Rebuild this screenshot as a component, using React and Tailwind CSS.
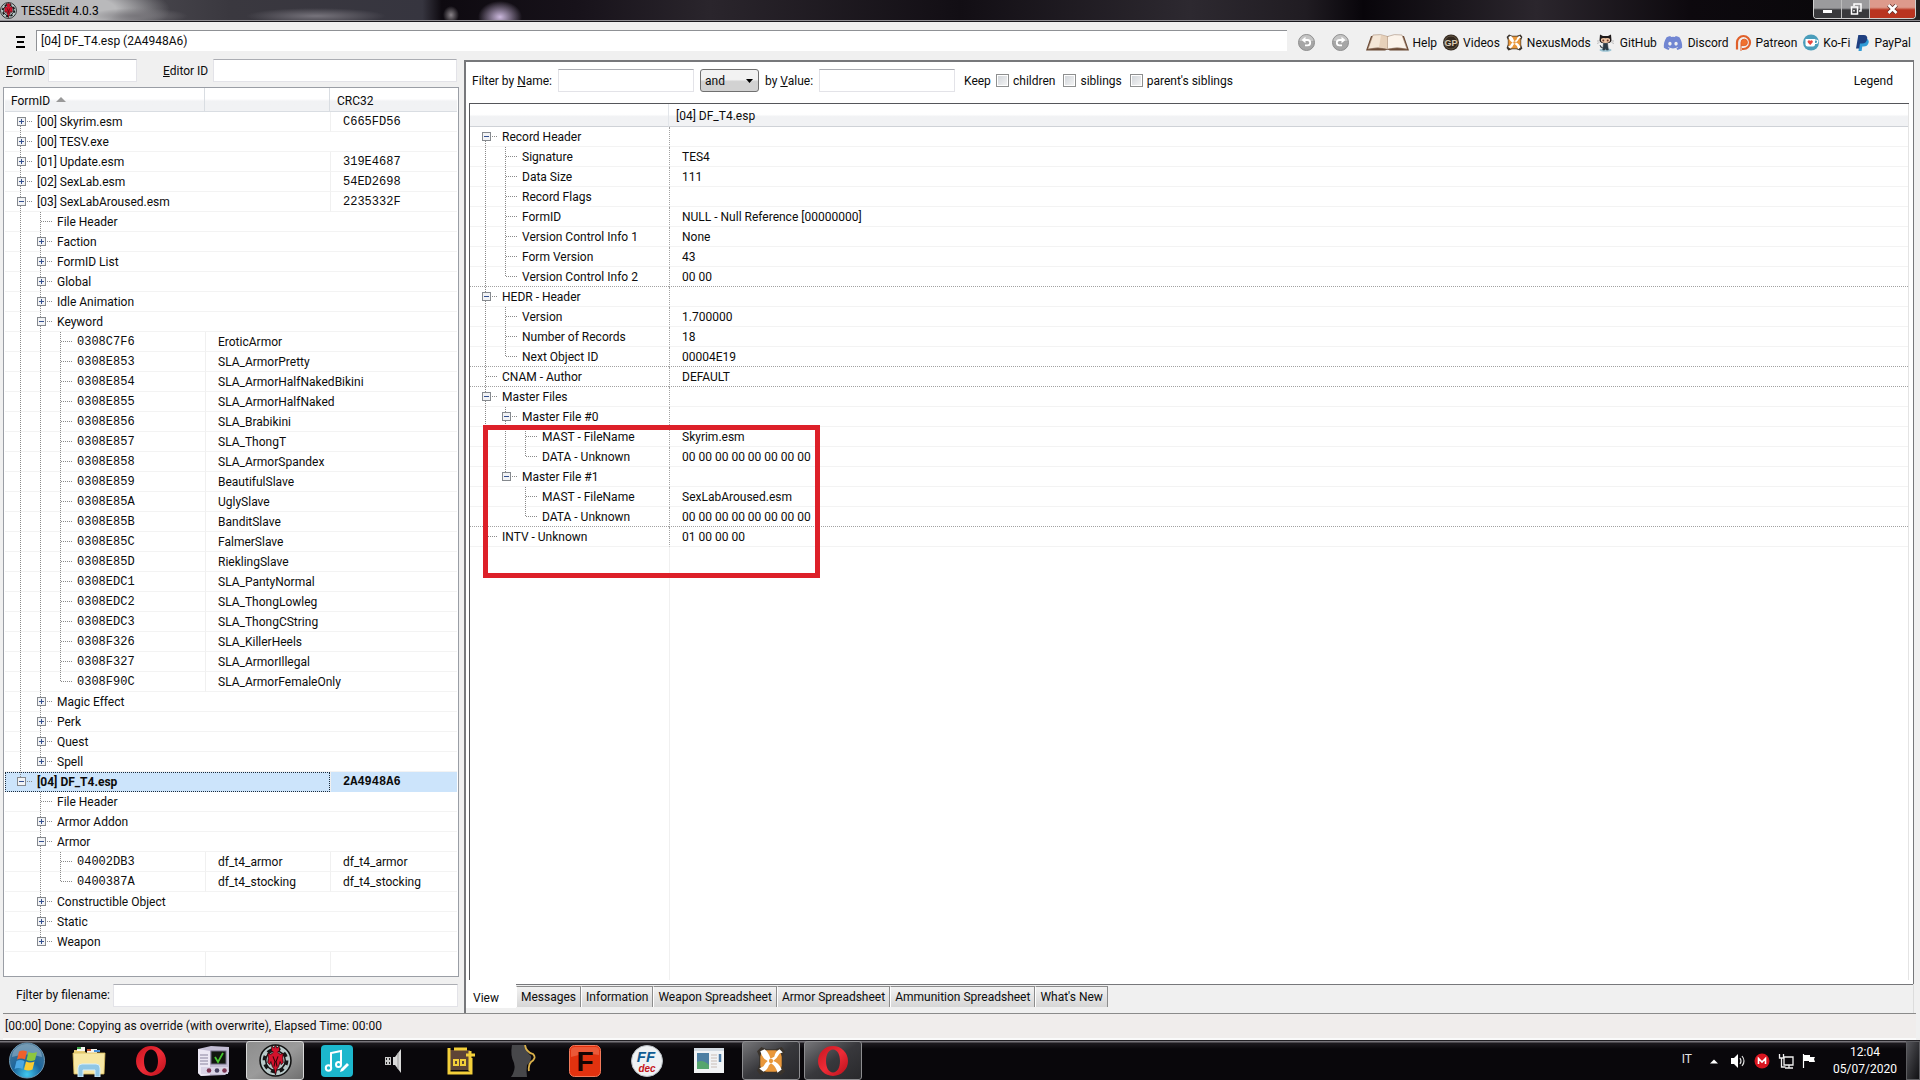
import React from "react";
import { FaDiscord } from "react-icons/fa";

/* ---------- data ---------- */

// level, label, expander ("+", "-" or none), editor id, third column
const keywords = [
  ["0308C7F6", "EroticArmor"],
  ["0308E853", "SLA_ArmorPretty"],
  ["0308E854", "SLA_ArmorHalfNakedBikini"],
  ["0308E855", "SLA_ArmorHalfNaked"],
  ["0308E856", "SLA_Brabikini"],
  ["0308E857", "SLA_ThongT"],
  ["0308E858", "SLA_ArmorSpandex"],
  ["0308E859", "BeautifulSlave"],
  ["0308E85A", "UglySlave"],
  ["0308E85B", "BanditSlave"],
  ["0308E85C", "FalmerSlave"],
  ["0308E85D", "RieklingSlave"],
  ["0308EDC1", "SLA_PantyNormal"],
  ["0308EDC2", "SLA_ThongLowleg"],
  ["0308EDC3", "SLA_ThongCString"],
  ["0308F326", "SLA_KillerHeels"],
  ["0308F327", "SLA_ArmorIllegal"],
  ["0308F90C", "SLA_ArmorFemaleOnly"],
];

const fileTree = [
  { level: 0, label: "[00] Skyrim.esm", box: "+", crc: "C665FD56" },
  { level: 0, label: "[00] TESV.exe", box: "+" },
  { level: 0, label: "[01] Update.esm", box: "+", crc: "319E4687" },
  { level: 0, label: "[02] SexLab.esm", box: "+", crc: "54ED2698" },
  { level: 0, label: "[03] SexLabAroused.esm", box: "-", crc: "2235332F" },
  { level: 1, label: "File Header" },
  { level: 1, label: "Faction", box: "+" },
  { level: 1, label: "FormID List", box: "+" },
  { level: 1, label: "Global", box: "+" },
  { level: 1, label: "Idle Animation", box: "+" },
  { level: 1, label: "Keyword", box: "-" },
  ...keywords.map(([id, name]) => ({ level: 2, label: id, name, mono: true })),
  { level: 1, label: "Magic Effect", box: "+" },
  { level: 1, label: "Perk", box: "+" },
  { level: 1, label: "Quest", box: "+" },
  { level: 1, label: "Spell", box: "+" },
  { level: 0, label: "[04] DF_T4.esp", box: "-", crc: "2A4948A6", selected: true },
  { level: 1, label: "File Header" },
  { level: 1, label: "Armor Addon", box: "+" },
  { level: 1, label: "Armor", box: "-" },
  { level: 2, label: "04002DB3", name: "df_t4_armor", third: "df_t4_armor", mono: true },
  { level: 2, label: "0400387A", name: "df_t4_stocking", third: "df_t4_stocking", mono: true },
  { level: 1, label: "Constructible Object", box: "+" },
  { level: 1, label: "Static", box: "+" },
  { level: 1, label: "Weapon", box: "+" },
];

const recordTree = [
  { level: 0, label: "Record Header", box: "-" },
  { level: 1, label: "Signature", value: "TES4" },
  { level: 1, label: "Data Size", value: "111" },
  { level: 1, label: "Record Flags" },
  { level: 1, label: "FormID", value: "NULL - Null Reference [00000000]" },
  { level: 1, label: "Version Control Info 1", value: "None" },
  { level: 1, label: "Form Version", value: "43" },
  { level: 1, label: "Version Control Info 2", value: "00 00", groupEnd: true },
  { level: 0, label: "HEDR - Header", box: "-" },
  { level: 1, label: "Version", value: "1.700000" },
  { level: 1, label: "Number of Records", value: "18" },
  { level: 1, label: "Next Object ID", value: "00004E19", groupEnd: true },
  { level: 0, label: "CNAM - Author", value: "DEFAULT", groupEnd: true },
  { level: 0, label: "Master Files", box: "-" },
  { level: 1, label: "Master File #0", box: "-" },
  { level: 2, label: "MAST - FileName", value: "Skyrim.esm" },
  { level: 2, label: "DATA - Unknown", value: "00 00 00 00 00 00 00 00" },
  { level: 1, label: "Master File #1", box: "-" },
  { level: 2, label: "MAST - FileName", value: "SexLabAroused.esm" },
  { level: 2, label: "DATA - Unknown", value: "00 00 00 00 00 00 00 00", groupEnd: true },
  { level: 0, label: "INTV - Unknown", value: "01 00 00 00" },
];

/* ---------- tree drawing ---------- */

// Whether another node of the given level follows before the branch closes.
function continues(rows, index, level) {
  for (let i = index + 1; i < rows.length; i++) {
    if (rows[i].level === level) return true;
    if (rows[i].level < level) return false;
  }
  return false;
}

const DOTS = { stroke: "#8a8a8a", strokeDasharray: "1 1", shapeRendering: "crispEdges" };

function Guide({ on }) {
  return (
    <svg className="h-5 w-5 shrink-0" viewBox="0 0 20 20" aria-hidden="true">
      {on && <line x1="9.5" y1="0" x2="9.5" y2="20" {...DOTS} />}
    </svg>
  );
}

function Node({ box, down, first, label }) {
  const art = (
    <svg className="h-5 w-[25px]" viewBox="0 0 25 20" aria-hidden="true">
      {!first && <line x1="9.5" y1="0" x2="9.5" y2="10" {...DOTS} />}
      {down && <line x1="9.5" y1="10" x2="9.5" y2="20" {...DOTS} />}
      <line x1="10" y1="9.5" x2="22" y2="9.5" {...DOTS} />
      {box && (
        <g shapeRendering="crispEdges">
          <rect x="6.5" y="5.5" width="8" height="8" fill="#f2f3f5" stroke="#85898e" />
          <line x1="8" y1="9.5" x2="13" y2="9.5" stroke="#34508f" />
          {box === "+" && <line x1="10.5" y1="7" x2="10.5" y2="12" stroke="#34508f" />}
        </g>
      )}
    </svg>
  );
  if (!box) return <span className="h-5 w-[25px] shrink-0">{art}</span>;
  return (
    <button type="button" className="h-5 w-[25px] shrink-0" aria-label={`Toggle ${label}`}>
      {art}
    </button>
  );
}

function TreeLabel({ rows, index }) {
  const row = rows[index];
  return (
    <div className="flex h-[19px] items-center overflow-visible pl-[6px]">
      {Array.from({ length: row.level }, (_, l) => (
        <Guide key={l} on={continues(rows, index, l)} />
      ))}
      <Node box={row.box} down={continues(rows, index, row.level)} first={index === 0} label={row.label} />
      <span className={row.mono ? "pl-px font-['Liberation_Mono',monospace]" : "pl-px"}>{row.label}</span>
    </div>
  );
}

/* ---------- left pane ---------- */

const box = "border border-[#e3e3e8] border-t-[#abadb3] bg-white outline-none";

function FileTree() {
  return (
    <div className="flex-1 overflow-hidden border border-[#9a9ea5] bg-white px-px">
      <table className="h-full w-full table-fixed border-separate border-spacing-0 text-left leading-4">
        <colgroup>
          <col className="w-[200px]" />
          <col className="w-[125px]" />
          <col />
        </colgroup>
        <thead className="bg-linear-to-b from-white from-45% to-[#f1f2f4] to-55%">
          <tr className="h-6">
            <th className="border-r border-b border-[#d9dde2] p-0 pt-[2px] pl-[6px] font-normal">
              FormID
              <svg className="mb-[3px] ml-[6px] inline h-[5px] w-[10px]" viewBox="0 0 8 4" aria-hidden="true">
                <path d="M0 4 4 0 8 4z" fill="#999" />
              </svg>
            </th>
            <th className="border-r border-b border-[#d9dde2] p-0" aria-label="Name" />
            <th className="border-b border-[#d9dde2] p-0 pt-[2px] pl-[7px] font-normal">CRC32</th>
          </tr>
        </thead>
        <tbody className="whitespace-nowrap">
          {fileTree.map((row, i) => {
            const tail = row.crc || row.third;
            const line = row.selected ? "border-b border-[#cce4fb]" : "border-b border-[#f3f3f3]";
            return (
              <tr key={i} className={row.selected ? "h-5 bg-[#cce4fb] font-bold" : "h-5"}>
                <td
                  colSpan={row.name ? 1 : 2}
                  className={
                    row.selected
                      ? "p-0 outline-1 -outline-offset-1 outline-dotted outline-[#1c2c3c]"
                      : `p-0 ${line}`
                  }
                >
                  <TreeLabel rows={fileTree} index={i} />
                </td>
                {row.name && <td className={`border-l border-l-[#f0f0f0] p-0 pl-3 ${line}`}>{row.name}</td>}
                <td
                  className={
                    tail
                      ? `border-l border-l-[#f0f0f0] p-0 pl-3 ${line} ${row.crc ? "font-['Liberation_Mono',monospace]" : ""}`
                      : `p-0 ${line}`
                  }
                >
                  {tail}
                </td>
              </tr>
            );
          })}
          <tr>
            <td className="p-0" />
            <td className="border-l border-[#f0f0f0] p-0" />
            <td className="border-l border-[#f0f0f0] p-0" />
          </tr>
        </tbody>
      </table>
    </div>
  );
}

function LeftPane() {
  return (
    <section className="flex w-[461px] shrink-0 flex-col pr-[2px] pl-[3px]">
      <div className="flex h-7 items-start">
        <label htmlFor="formid" className="w-[45px] pt-1 pl-[3px]">
          <u>F</u>ormID
        </label>
        <input id="formid" className={`h-[23px] w-[89px] ${box}`} />
        <label htmlFor="editorid" className="ml-[26px] w-[50px] pt-1 whitespace-nowrap">
          <u>E</u>ditor ID
        </label>
        <input id="editorid" className={`mr-[2px] h-[23px] min-w-0 flex-1 ${box}`} />
      </div>
      <FileTree />
      <div className="flex h-9 items-center">
        <label htmlFor="filename" className="w-[110px] pl-[13px] whitespace-nowrap">
          F<u>i</u>lter by filename:
        </label>
        <input id="filename" className={`mr-px h-[23px] min-w-0 flex-1 ${box}`} />
      </div>
    </section>
  );
}

/* ---------- right pane ---------- */

function Keep({ id, label }) {
  return (
    <label htmlFor={id} className="mr-2 flex items-center gap-1">
      <input
        id={id}
        type="checkbox"
        className="h-[13px] w-[13px] appearance-none border border-[#8e8f8f] bg-linear-to-br from-[#cfd3d8] to-[#f6f6f6] ring-1 ring-white ring-inset"
      />
      {label}
    </label>
  );
}

function RecordTable() {
  return (
    <div className="relative mr-1 ml-[3px] min-h-0 flex-1 overflow-hidden border-t border-l border-[#55565a]">
      <table className="h-full w-full table-fixed border-separate border-spacing-0 border-r border-[#e4e4e4] text-left leading-4">
        <colgroup>
          <col className="w-[199px]" />
          <col />
        </colgroup>
        <thead className="bg-linear-to-b from-white from-45% to-[#f1f2f4] to-55%">
          <tr className="h-[23px]">
            <th className="border-r border-b border-[#cfd2d7] border-r-[#e3e6ea] p-0" aria-label="Field" />
            <th className="border-b border-[#cfd2d7] p-0 pt-[2px] pl-[7px] font-normal">[04] DF_T4.esp</th>
          </tr>
        </thead>
        <tbody className="whitespace-nowrap">
          {recordTree.map((row, i) => {
            const line = row.groupEnd
              ? "border-b border-b-[#a2a2a2] [border-bottom-style:dotted]"
              : "border-b border-b-[#f3f3f3]";
            return (
              <tr key={i} className="h-5">
                <td className={`p-0 ${line}`}>
                  <TreeLabel rows={recordTree} index={i} />
                </td>
                <td className={`border-l border-l-[#a2a2a2] p-0 pl-3 [border-left-style:dotted] ${line}`}>
                  {row.value}
                </td>
              </tr>
            );
          })}
          <tr>
            <td className="p-0" />
            <td className="border-l border-[#f0f0f0] p-0" />
          </tr>
        </tbody>
      </table>
      <div className="pointer-events-none absolute top-[321px] left-[13px] h-[153px] w-[337px] border-[5px] border-[#dd2029]" />
    </div>
  );
}

const tabs = [
  "Messages",
  "Information",
  "Weapon Spreadsheet",
  "Armor Spreadsheet",
  "Ammunition Spreadsheet",
  "What's New",
];

function RightPane() {
  return (
    <section className="mt-px mr-[6px] ml-[3px] flex min-w-0 flex-1 flex-col border-l-2 border-[#77787b]">
      <div className="flex min-h-0 flex-1 flex-col border-t-2 border-r border-b border-[#77787b] bg-white pb-1">
        <div className="flex h-[41px] items-center pb-1 pl-[6px]">
          <label htmlFor="byname" className="w-[86px]">
            Filter by <u>N</u>ame:
          </label>
          <input id="byname" className={`h-[23px] w-[136px] ${box}`} />
          <select
            aria-label="Combine filters"
            defaultValue="and"
            className="mx-[6px] h-[23px] w-[59px] appearance-none rounded-[3px] border border-[#707070] bg-linear-to-b from-[#f2f2f2] from-45% to-[#d2d2d2] to-55% pl-1 outline-none"
          >
            <option>and</option>
            <option>or</option>
          </select>
          <svg className="pointer-events-none mr-[8px] -ml-[19px] h-1 w-[7px]" viewBox="0 0 7 4" aria-hidden="true">
            <path d="M0 0h7L3.500 4z" fill="#000" />
          </svg>
          <label htmlFor="byvalue" className="ml-[4px] w-[54px]">
            by <u>V</u>alue:
          </label>
          <input id="byvalue" className={`h-[23px] w-[136px] ${box}`} />
          <span className="mr-[5px] ml-[9px] w-[27px]">Keep</span>
          <Keep id="children" label="children" />
          <Keep id="siblings" label="siblings" />
          <Keep id="parents" label="parent's siblings" />
          <button type="button" className="mr-5 ml-auto">
            Legend
          </button>
        </div>
        <RecordTable />
      </div>
      <div className="-mt-px flex h-[29px] items-start border-r border-[#dcdcdc]" role="tablist">
        <button type="button" role="tab" aria-selected="true" className="h-6 w-[50px] bg-white pt-[3px] pr-[10px]">
          View
        </button>
        {tabs.map((t) => (
          <button
            key={t}
            type="button"
            role="tab"
            className="mt-[2px] h-[21px] border-t border-r border-l border-t-[#8c8c8c] border-r-[#8c8c8c] border-l-white bg-linear-to-b from-[#f2f2f2] to-[#d6d6d6] px-1 pb-px"
          >
            {t}
          </button>
        ))}
      </div>
    </section>
  );
}

/* ---------- toolbar ---------- */

function RoundArrow({ flip, label }) {
  return (
    <button type="button" aria-label={label}>
      <svg width="17" height="17" viewBox="0 0 17 17" className={flip ? "-scale-x-100" : ""}>
        <circle cx="8.500" cy="8.500" r="8" fill="#a6a6a6" stroke="#8e8e8e" />
        <path d="M1.500 7a7 6 0 0 1 14 0z" fill="#c4c4c4" />
        <path d="M5 6h4.500a2.700 2.700 0 0 1 0 5.400H7" fill="none" stroke="#fff" strokeWidth="1.800" />
        <path d="M7.500 2.800v6.400L3.600 6z" fill="#fff" />
      </svg>
    </button>
  );
}

function BookIcon() {
  return (
    <svg width="43" height="17" viewBox="0 0 43 17">
      <path d="M5 2 0 16.500h19q2.500-1.500 5 0h19L38 2z" fill="#6b4a35" />
      <path d="M7 1Q15-.5 21.500 2.500V15Q12 12.500 2 15z" fill="#f4e6d6" stroke="#a58c78" strokeWidth=".6" />
      <path d="M36 1Q28-.5 21.500 2.500V15Q31 12.500 41 15z" fill="#fbf3ea" stroke="#a58c78" strokeWidth=".6" />
      <path d="M21.500 2.500Q17 1 15 1L13 13.200q5 .3 8.500 1.800z" fill="#dfc6ac" opacity=".7" />
    </svg>
  );
}

function NexusIcon({ size = 17 }) {
  return (
    <svg width={size} height={size} viewBox="0 0 28 28">
      <path d="M5 1 10 3 18 3 24 1 27 5 25 10 25 18 27 24 23 27 17 25 10 25 4 27 1 23 3 17 3 10 1 5z" fill="#3a332c" />
      <rect x="4" y="4" width="20" height="20" rx="6" fill="#e9973a" />
      <path d="M4 5 8 3Q12 6 13.500 12L17 10Q18 5 22 3l3 3-3 1Q20 11 16 14q5 1 8 8l-4 3q-1-6-6-9l-2 2q-1 4-5 6l-4-3 4-2q1-3 4-5Q6 12 4 5z" fill="#fff" />
      <circle cx="14" cy="14" r="2" fill="#e9973a" />
    </svg>
  );
}

const links = [
  { label: "Help", icon: <BookIcon />, gap: "gap-1" },
  {
    label: "Videos",
    gap: "gap-1",
    icon: (
      <svg width="16" height="17" viewBox="0 0 16 17">
        <circle cx="8" cy="8.500" r="8" fill="#33291f" />
        <circle cx="8" cy="8.500" r="6.500" fill="none" stroke="#7a6a55" strokeWidth=".7" />
        <text x="8" y="12" textAnchor="middle" fontSize="9" fontWeight="700" fill="#d9cbb4" fontFamily="Liberation Sans">
          GP
        </text>
      </svg>
    ),
  },
  { label: "NexusMods", icon: <NexusIcon />, gap: "gap-1" },
  {
    label: "GitHub",
    gap: "gap-[6px]",
    icon: (
      <svg width="17" height="18" viewBox="0 0 17 18">
        <ellipse cx="8.500" cy="16" rx="6" ry="1.800" fill="#9cc4d4" />
        <path d="M3 .5 6 2h5l3-1.500.5 6q-.5 3-6 3t-6-3z" fill="#1f1a1a" />
        <path d="M4 5q1-1.200 4.500-.8Q12 3.800 13 5q.8 4-4.500 4T4 5z" fill="#efc5a4" />
        <circle cx="6.300" cy="6.500" r="1" fill="#6b3b2c" />
        <circle cx="10.700" cy="6.500" r="1" fill="#6b3b2c" />
        <path d="M6.500 9.500h4l.8 6.500H9.300l-.8-1.500-.8 1.500H5.800zM6 14Q3 14 3 11" fill="#2b3a44" stroke="#2b3a44" strokeWidth=".6" />
        <path d="M0 7h2.500M0 9.500 2.500 8.500M14.500 7H17M14.500 8.500 17 9.500" stroke="#8a8a8a" strokeWidth=".5" />
      </svg>
    ),
  },
  { label: "Discord", icon: <FaDiscord size={20} color="#7186d2" />, gap: "gap-[5px]" },
  {
    label: "Patreon",
    gap: "gap-1",
    icon: (
      <svg width="17" height="17" viewBox="0 0 17 17">
        <path d="M2 15.500V8.500a6.500 6.500 0 1 1 6.500 6.500H7" fill="none" stroke="#e0602b" strokeWidth="2.200" />
        <path d="M6 17V8.300a3.200 3.200 0 1 1 3.200 3.300H6" fill="#f0712f" stroke="#e0602b" strokeWidth="1" />
      </svg>
    ),
  },
  {
    label: "Ko-Fi",
    gap: "gap-1",
    icon: (
      <svg width="16" height="17" viewBox="0 0 16 17">
        <circle cx="8" cy="8.500" r="8" fill="#4a9dbb" />
        <path d="M2.500 5h9.500v5.500q0 2-2 2h-5.500q-2 0-2-2z" fill="#fff" />
        <path d="M12 6h1a1.600 1.600 0 0 1 0 3.500h-1" fill="none" stroke="#fff" strokeWidth="1.200" />
        <path d="M7.200 11 4.800 8.500a1.400 1.400 0 0 1 2.400-1.500 1.400 1.400 0 0 1 2.400 1.500z" fill="#e8463e" />
      </svg>
    ),
  },
  {
    label: "PayPal",
    gap: "gap-[5px]",
    icon: (
      <svg width="13" height="16" viewBox="0 0 13 16">
        <path d="M4 3.500h6.500Q13.500 5 12.500 8q-1 3.500-5 3.500H6.300L5.600 16H2.500z" fill="#2f9bd6" />
        <path d="M2.300 0h5.500q4 .3 3.400 4-.8 4.500-5.200 4.500H4L3.200 13.500H0z" fill="#1f3f80" />
      </svg>
    ),
  },
];

function Toolbar() {
  return (
    <header className="flex h-[37px] shrink-0 items-center pr-[9px]">
      <button type="button" aria-label="Menu" className="mr-[11px] ml-[15px] flex w-[10px] flex-col items-center gap-[3px] pt-[3px]">
        <span className="h-[2px] w-[9px] bg-black" />
        <span className="h-[2px] w-[7px] bg-black" />
        <span className="h-[2px] w-[9px] bg-black" />
      </button>
      <input
        aria-label="Current record"
        defaultValue="[04] DF_T4.esp (2A4948A6)"
        className="h-[21px] min-w-0 flex-1 border-t border-l border-[#8f9195] bg-white pb-px pl-1 outline-none"
      />
      <nav className="ml-[11px] flex items-center pt-1">
        <div className="mr-[17px] flex gap-[17px]">
          <RoundArrow label="Back" />
          <RoundArrow label="Forward" flip />
        </div>
        <div className="flex items-center gap-[6px]">
          {links.map((l) => (
            <a key={l.label} href="#" className={`flex items-center ${l.gap}`}>
              {l.icon}
              {l.label}
            </a>
          ))}
        </div>
      </nav>
    </header>
  );
}

/* ---------- window frame ---------- */

function EditIcon({ size }) {
  return (
    <svg width={size} height={size} viewBox="0 0 32 32">
      <circle cx="16" cy="16" r="15" fill="#b9c9c9" stroke="#111" strokeWidth="1.500" />
      <circle cx="16" cy="16" r="11" fill="none" stroke="#151515" strokeWidth="3" strokeDasharray="4.400 4.240" />
      <circle cx="16" cy="16" r="9.500" fill="none" stroke="#151515" strokeWidth="1.500" />
      <path
        d="M16 1l1.500 3 2-2 .5 4-2 2 2.500 2 3-1-.5 5 .5 4-2 2-1-3-1.500 5-1.500 2-1.500 6-1.500-6-1.500-2-1.500-5-1 3-2-2 .5-4-.5-5 3 1 2.500-2-2-2 .5-4 2 2z"
        fill="#d4122c"
        stroke="#230508"
        strokeWidth=".8"
      />
      <path d="M13.500 12l2 5-1 5M18.500 12l-2 5 1 5" stroke="#2b0509" strokeWidth="1" fill="none" />
    </svg>
  );
}

function TitleBar() {
  return (
    <div className="flex h-[22px] shrink-0 items-center justify-between overflow-hidden border-b border-[#19171c] bg-[linear-gradient(0deg,#8f8d92_0,#8f8d92_1px,transparent_1px),radial-gradient(ellipse_22px_16px_at_500px_17px,#cbb8dd,transparent),radial-gradient(ellipse_8px_9px_at_451px_15px,#8a8489,transparent),radial-gradient(ellipse_70px_8px_at_316px_16px,#77747c,transparent),radial-gradient(ellipse_50px_8px_at_138px_16px,#77757a,transparent),radial-gradient(ellipse_120px_32px_at_50px_10px,#b9b9bb_55%,transparent),linear-gradient(90deg,#5d5c62_0,#3a383f_12%,#36353f_22%,#0e0a10_23%,#17121a_30%,#2a252c_37%,#120e14_50%,#2d2930_62%,#201c22_68%,#08050a_71%,#2b262d_80%,#0d090e_88%,#0a080b_95%,#3a373b_98%,#222_100%)]">
      <div className="flex items-center gap-1">
        <EditIcon size={17} />
        <span className="text-black">TES5Edit 4.0.3</span>
      </div>
      <div className="mr-1 flex h-[19px] self-start overflow-hidden rounded-b-[4px] border border-t-0 border-[#d0d0d0]">
        <button
          type="button"
          aria-label="Minimize"
          className="flex w-7 items-end justify-center border-r border-[#bcbcbc] bg-linear-to-b from-[#9b9b9d] from-45% to-[#39393c] to-55% pb-[5px]"
        >
          <span className="h-[3px] w-[9px] bg-white" />
        </button>
        <button
          type="button"
          aria-label="Restore"
          className="flex w-7 items-center justify-center border-r border-[#bcbcbc] bg-linear-to-b from-[#9b9b9d] from-45% to-[#39393c] to-55%"
        >
          <svg width="12" height="12" viewBox="0 0 12 12" fill="none" stroke="#fff" strokeWidth="1.500">
            <path d="M4 3V1h7v7H9" />
            <path d="M1.500 4h6v7h-6zM4 7v1.500" />
          </svg>
        </button>
        <button
          type="button"
          aria-label="Close"
          className="flex w-[45px] items-center justify-center bg-linear-to-b from-[#dd9a8c] from-40% to-[#b93420] to-55%"
        >
          <svg width="11" height="10" viewBox="0 0 11 10">
            <path d="M1.500 1 9.500 9M9.500 1 1.500 9" stroke="#5b2b25" strokeWidth="4" />
            <path d="M1.500 1 9.500 9M9.500 1 1.500 9" stroke="#fff" strokeWidth="2.600" />
          </svg>
        </button>
      </div>
    </div>
  );
}

/* ---------- taskbar ---------- */

function Opera() {
  return (
    <svg width="32" height="32" viewBox="0 0 32 32">
      <defs>
        <linearGradient id="op" x1="0" y1="0" x2="1" y2="1">
          <stop offset="0" stopColor="#c8141f" />
          <stop offset=".5" stopColor="#ee2c37" />
          <stop offset="1" stopColor="#b80f1a" />
        </linearGradient>
      </defs>
      <path
        fillRule="evenodd"
        fill="url(#op)"
        d="M16 1a15 15 0 1 0 0 30a15 15 0 1 0 0-30zM16 4.500c4.300 0 7 5 7 11.500s-2.700 11.500-7 11.500S9 22.500 9 16s2.700-11.500 7-11.500z"
      />
    </svg>
  );
}

const apps = [
  {
    name: "Explorer",
    icon: (
      <svg width="34" height="32" viewBox="0 0 34 32">
        <path d="M2 5h10l2 3h17v20H2z" fill="#e8ce78" />
        <path d="M5 2h8v4H5zM15 4h10v4H15z" fill="#f6f6f0" />
        <path d="M5 2h4v2H5z" fill="#3fa54a" />
        <path d="M15 4h4v2h-4z" fill="#c9542f" />
        <path d="M22 5h6v2h-6z" fill="#4a90d9" />
        <path d="M1 8h32l-1 21H2z" fill="#f7e7a4" stroke="#d9bb5c" strokeWidth=".8" />
        <path d="M6 32V23q0-4 4-4h14q4 0 4 4v9h-5v-7H11v7z" fill="#8fc7e6" stroke="#d6eefa" />
      </svg>
    ),
  },
  { name: "Opera", icon: <Opera /> },
  {
    name: "System monitor",
    icon: (
      <svg width="33" height="32" viewBox="0 0 33 32">
        <path d="M1 4 14 1 32 2v25l-4 3-24 1-3-3z" fill="#c3bdd4" />
        <path d="M1 4 13 6v24L4 31l-3-3z" fill="#ece8f4" />
        <path d="M3 10h8M3 13h8M3 16h8M3 19h8" stroke="#8a849e" strokeWidth="1.200" />
        <rect x="14" y="6" width="15" height="13" fill="#10160f" stroke="#6c6780" />
        <path d="M18 12l3 5 5-9" fill="none" stroke="#47c531" strokeWidth="1.800" />
        <path d="M4 22h27v7H4z" fill="#d9d4e6" />
        <circle cx="12" cy="25.500" r="2.300" fill="#7b3350" />
        <circle cx="20" cy="25.500" r="2.300" fill="#4a4563" />
        <circle cx="27.500" cy="25.500" r="2.300" fill="#7b3350" />
      </svg>
    ),
  },
  { name: "TES5Edit", icon: <EditIcon size={33} />, state: "active" },
  {
    name: "Audio editor",
    icon: (
      <svg width="32" height="32" viewBox="0 0 32 32">
        <rect width="32" height="32" rx="4" fill="#1cb7cd" />
        <path d="M10 23V8l10-2v13" fill="none" stroke="#fff" strokeWidth="2" />
        <circle cx="7.500" cy="23" r="2.700" fill="none" stroke="#fff" strokeWidth="2" />
        <circle cx="17.500" cy="19.500" r="2.500" fill="none" stroke="#fff" strokeWidth="2" />
        <path d="M19 27l1-3 6-6 2 2-6 6z" fill="#fff" />
      </svg>
    ),
  },
  {
    name: "Sound",
    icon: (
      <svg width="30" height="26" viewBox="0 0 30 26">
        <path d="M1 9h6v8H1z" fill="#c9c9c9" />
        <path d="M2 10h1v2H2zM5 10h1v2H5zM2 14h1v2H2zM5 14h1v2H5z" fill="#222" />
        <path d="M9 9h2l6-8v24l-6-8H9z" fill="#d9d9d9" />
        <path d="M14 5v16" stroke="#9a9a9a" />
      </svg>
    ),
  },
  {
    name: "LOOT",
    icon: (
      <svg width="30" height="28" viewBox="0 0 30 28">
        <path d="M4 3h20v20H4z" fill="#5d4436" />
        <path d="M3 1v25h22V11M24 4v20M20 8h9M8 2h13" fill="none" stroke="#f3cf3a" strokeWidth="3" />
        <path d="M8 13h4v5H8zM15 13h4v5h-4z" fill="none" stroke="#f3cf3a" strokeWidth="2" />
      </svg>
    ),
  },
  {
    name: "BodySlide",
    icon: (
      <svg width="28" height="32" viewBox="0 0 28 32">
        <path d="M3 0h14q0 7 5 11 1 5-4 9-1 6 0 12H2q5-7 3-14Q1 10 3 0z" fill="#47474a" />
        <path d="M16 0q1 7 8 9 4 4-2 8-3 3-2 9" fill="none" stroke="#d9b04a" strokeWidth="1.800" />
      </svg>
    ),
  },
  {
    name: "Flash",
    icon: (
      <svg width="32" height="32" viewBox="0 0 32 32">
        <rect x=".5" y=".5" width="31" height="31" rx="5" fill="#e2320f" stroke="#f27a5c" />
        <path d="M2 5q0-3 4-3h20q4 0 4 3v5Q16 7 2 12z" fill="#f06848" opacity=".7" />
        <text x="16" y="26" textAnchor="middle" fontSize="28" fontWeight="700" fontFamily="Liberation Sans" fill="#160403">
          F
        </text>
      </svg>
    ),
  },
  {
    name: "FFDec",
    icon: (
      <svg width="32" height="32" viewBox="0 0 32 32">
        <circle cx="16" cy="16" r="15.500" fill="#eef1f4" stroke="#b7bcc2" />
        <text x="15" y="17" textAnchor="middle" fontSize="15" fontStyle="italic" fontWeight="700" fontFamily="Liberation Sans" fill="#0e5c93">
          FF
        </text>
        <text x="16" y="27" textAnchor="middle" fontSize="10" fontStyle="italic" fontWeight="700" fontFamily="Liberation Sans" fill="#c5161c">
          dec
        </text>
      </svg>
    ),
  },
  {
    name: "Viewer",
    icon: (
      <svg width="30" height="25" viewBox="0 0 30 25">
        <rect width="30" height="25" fill="#f1f3f5" />
        <rect width="30" height="3" fill="#d2dae2" />
        <rect x="3" y="5" width="12" height="16" fill="#4e7fa3" />
        <path d="M3 21V14q6-3 12 3v4z" fill="#55a56e" />
        <path d="M17 7h6M17 10h6M17 13h6M17 16h6M17 19h6" stroke="#c9bdb6" />
        <path d="M26 6v8" stroke="#4b7aa5" strokeWidth="2.500" />
      </svg>
    ),
  },
  { name: "Nexus Mod Manager", icon: <NexusIcon size={30} />, state: "open" },
  { name: "Opera window", icon: <Opera />, state: "open" },
];

const appStyle = {
  active: "border border-[#d8d8d8] bg-linear-to-br from-[#8e8e8e] via-[#9b9b9b] to-[#6f6f6f]",
  open: "border border-[#8d8d90] bg-linear-to-br from-[#77777a] via-[#38383c] to-[#29292c]",
};

function Taskbar() {
  return (
    <footer className="flex h-10 shrink-0 items-stretch border-t border-[#242227] bg-[#09070b] bg-[linear-gradient(#77747a_0,#77747a_1px,#1d1a1f_2px,transparent_8px)] text-white">
      <button type="button" aria-label="Start" className="mr-[6px] flex w-[54px] items-center justify-center">
        <svg width="38" height="37" viewBox="0 0 38 37">
          <defs>
            <radialGradient id="orb" cx=".5" cy=".9" r=".9">
              <stop offset="0" stopColor="#3fc8ef" />
              <stop offset=".45" stopColor="#1c659c" />
              <stop offset="1" stopColor="#4d7896" />
            </radialGradient>
          </defs>
          <circle cx="19" cy="18.500" r="17.500" fill="url(#orb)" stroke="#6f98b3" />
          <path d="M4 15a15 13 0 0 1 30 0q-15-5-30 0z" fill="#bcd3e0" opacity=".4" />
          <path d="M11 9.500q4-2 8 0l-2 8q-4-2-8 0z" fill="#f0602c" />
          <path d="M20.500 10q4 2 8.500 0l-2 8q-4 2-8.500 0z" fill="#8dc63f" />
          <path d="M8.500 19q4-2 8 0l-2 8q-4-2-8 0z" fill="#4ba7e4" />
          <path d="M18 19.500q4 2 8.500 0l-2 8q-4 2-8.500 0z" fill="#fbcb32" />
        </svg>
      </button>
      <div className="flex gap-1">
        {apps.map((a) => (
          <button
            key={a.name}
            type="button"
            aria-label={a.name}
            className={`flex w-[58px] items-center justify-center rounded-[3px] ${a.state ? appStyle[a.state] : ""}`}
          >
            {a.icon}
          </button>
        ))}
      </div>
      <div className="ml-auto flex items-center">
        <span className="mr-[17px] mb-1 text-[#e4e4e4]">IT</span>
        <svg width="106" height="18" viewBox="0 0 106 18" className="mr-[9px]" role="img" aria-label="Notification icons">
          <path d="M1 11.500 5 7.500 9 11.500z" fill="#fff" />
          <path d="M22 6h3l4-4v14l-4-4h-3z" fill="#fff" />
          <path d="M31 6q2 3 0 6M33 4q4 5 0 10" fill="none" stroke="#ddd" strokeWidth="1.200" />
          <circle cx="53" cy="9" r="7.500" fill="#d9141f" />
          <path d="M49.500 12V6.500L53 10l3.500-3.500V12" fill="none" stroke="#fff" strokeWidth="1.600" />
          <path d="M75 5h9v8H75zM76 16h8M80 13v3" fill="none" stroke="#f0f0f0" strokeWidth="1.300" />
          <path d="M70.500 2v4h4V2M72.500 6v9h4" fill="none" stroke="#f0f0f0" strokeWidth="1.300" />
          <path d="M94.500 2v14" stroke="#fff" strokeWidth="1.200" />
          <path d="M95 3h6v2h5l-1 2 1 3h-6V9h-5z" fill="#fff" />
        </svg>
        <div className="w-[82px] text-center leading-[17px]">
          <div>12:04</div>
          <div>05/07/2020</div>
        </div>
      </div>
      <button
        type="button"
        aria-label="Show desktop"
        className="w-[14px] border border-[#5c5c60] bg-linear-to-br from-[#55555a] to-[#111114]"
      />
    </footer>
  );
}

export default function App() {
  return (
    <div className="flex h-screen flex-col overflow-hidden bg-[#f0f0f0] font-['Roboto','Open_Sans',sans-serif] text-[12px] leading-4 text-[#0c0c0c]">
      <TitleBar />
      <Toolbar />
      <main className="flex min-h-0 flex-1">
        <LeftPane />
        <RightPane />
      </main>
      <div className="mr-1 ml-[3px] flex h-[27px] shrink-0 items-center border-t border-b-2 border-t-[#8b8b8b] border-b-[#fafafa] bg-[#f0edec] pl-[2px]" role="status">
        [00:00] Done: Copying as override (with overwrite), Elapsed Time: 00:00
      </div>
      <Taskbar />
    </div>
  );
}
